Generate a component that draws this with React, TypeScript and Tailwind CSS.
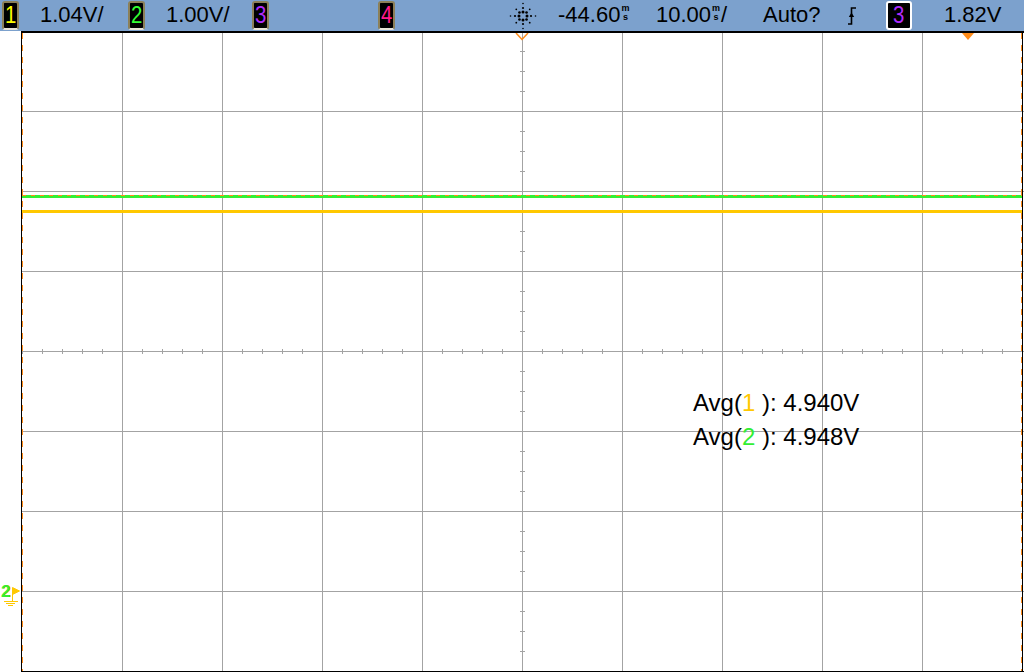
import React from "react"

const GRID = "#a3a3a3"

function Badge({ n, color, wide }: { n: string; color: string; wide?: boolean }) {
  return (
    <span
      className={
        wide
          ? "w-[26px] h-[29px] shrink-0 bg-black border-2 border-white rounded-[3px] flex items-center justify-center text-[24px] leading-none overflow-hidden"
          : "w-[17px] h-[29px] shrink-0 bg-black border-2 border-[#8c8058] border-b-[#e8e4d8] rounded-[3px] flex items-center justify-center text-[24px] leading-none overflow-hidden"
      }
      style={{ color }}
    >
      <span className="scale-x-[0.85] -mt-[1px]">{n}</span>
    </span>
  )
}

function Unit() {
  return (
    <span className="inline-flex flex-col items-center text-[9px] font-bold leading-[9px] -translate-y-[4px] mx-[1px]">
      <span>m</span>
      <span>s</span>
    </span>
  )
}

function Sun() {
  const dots: { x: number; y: number; r: number }[] = []
  for (let i = 0; i < 8; i++) {
    const a = (i * Math.PI) / 4
    const card = i % 2 === 0
    const rings = card ? [[4, 1.5], [8, 1.1], [12.5, 0.8]] : [[5, 1.3], [9.5, 0.9]]
    rings.forEach(([d, r]) => dots.push({ x: 15 + Math.cos(a) * d, y: 14 + Math.sin(a) * d, r }))
  }
  return (
    <svg width="30" height="28" viewBox="0 0 30 28" className="shrink-0">
      {dots.map((d, i) => (
        <circle key={i} cx={d.x} cy={d.y} r={d.r} fill="#000" />
      ))}
    </svg>
  )
}

function TriggerEdge() {
  return (
    <svg width="9" height="18" viewBox="0 0 9 18" className="shrink-0">
      <path d="M0 17 H3.5 V1 H8" stroke="#000" strokeWidth="1.6" fill="none" />
      <polygon points="0.8,10 3.5,5.5 6.2,10" fill="#000" />
    </svg>
  )
}

function Plot() {
  const w = 1003
  const h = 641
  const vLines = Array.from({ length: 9 }, (_, k) => 101 + 100 * k)
  const hLines = Array.from({ length: 7 }, (_, k) => 80 + 80 * k)
  const xTicks = Array.from({ length: 51 }, (_, k) => 1 + 20 * k)
  const yTicks = Array.from({ length: 33 }, (_, k) => 20 * k)
  return (
    <svg width={w} height={h} viewBox={`0 0 ${w} ${h}`} className="shrink-0 block">
      <rect x="0" y="0" width={w} height={h} fill="#fff" />
      {vLines.map((x) => (
        <line key={"v" + x} x1={x + 0.5} y1={0} x2={x + 0.5} y2={h} stroke={GRID} strokeWidth="1" />
      ))}
      {hLines.map((y) => (
        <line key={"h" + y} x1={0} y1={y + 0.5} x2={w} y2={y + 0.5} stroke={GRID} strokeWidth="1" />
      ))}
      {xTicks.map((x) => (
        <line key={"xt" + x} x1={x + 0.5} y1={318} x2={x + 0.5} y2={323} stroke={GRID} strokeWidth="1" />
      ))}
      {yTicks.map((y) => (
        <line key={"yt" + y} x1={499} y1={y + 0.5} x2={504} y2={y + 0.5} stroke={GRID} strokeWidth="1" />
      ))}

      {/* traces */}
      <rect x="1" y="164" width="1000" height="3" fill="#33f033" />
      <line x1="1" y1="164.5" x2="1001" y2="164.5" stroke="#ff8c1a" strokeWidth="1" strokeDasharray="4 5" />
      <rect x="1" y="179" width="1000" height="3" fill="#ffc800" />

      {/* time reference markers */}
      <line x1="1.5" y1="2" x2="1.5" y2={h} stroke="#ff8c1a" strokeWidth="1" strokeDasharray="6 6" />
      <line x1="1000.5" y1="2" x2="1000.5" y2={h} stroke="#ff8c1a" strokeWidth="1" strokeDasharray="6 6" />
      <polyline points="495,2 501,8.5 507,2" fill="none" stroke="#ff8c1a" strokeWidth="1.5" />
      <polygon points="941,2 953,2 947,9" fill="#ff8c1a" />

      {/* frame */}
      <rect x="0" y="0" width={w} height="2" fill="#000" />
      <line x1="0.5" y1="0" x2="0.5" y2={h} stroke="#000" strokeWidth="1" />
      <line x1="1001.5" y1="0" x2="1001.5" y2={h} stroke="#000" strokeWidth="1" />
      <line x1="0" y1="640.5" x2={w} y2="640.5" stroke="#000" strokeWidth="1" />
    </svg>
  )
}

export default function App() {
  return (
    <div className="w-[1024px] h-[672px] bg-white overflow-hidden flex flex-col font-['Liberation_Sans',Arial,sans-serif] text-black">
      {/* status bar */}
      <div className="h-[31px] shrink-0 bg-[#7ca1cd] flex items-center pl-[2px] text-[22px] leading-none whitespace-nowrap">
        <Badge n="1" color="#ffff00" />
        <span className="ml-[21px] w-[88px] shrink-0 mb-[2px]">1.04V/</span>
        <Badge n="2" color="#33ff33" />
        <span className="ml-[21px] w-[86px] shrink-0 mb-[2px]">1.00V/</span>
        <Badge n="3" color="#b02cff" />
        <span className="w-[109px] shrink-0" />
        <Badge n="4" color="#ff1a8c" />
        <span className="w-[113px] shrink-0" />
        <Sun />
        <span className="ml-[20px] w-[98px] shrink-0 mb-[2px] flex items-end">
          <span>-44.60</span>
          <Unit />
        </span>
        <span className="w-[107px] shrink-0 mb-[2px] flex items-end">
          <span>10.00</span>
          <Unit />
          <span>/</span>
        </span>
        <span className="w-[85px] shrink-0 mb-[2px]">Auto?</span>
        <span className="w-[38px] shrink-0 flex">
          <TriggerEdge />
        </span>
        <Badge n="3" color="#b02cff" wide />
        <span className="ml-[32px] mb-[2px]">1.82V</span>
      </div>

      {/* graticule */}
      <div className="flex-1 flex relative">
        <div className="w-[21px] shrink-0 relative">
          <span className="absolute left-[1px] top-[552px] text-[17px] font-bold leading-none text-[#33ee33] [text-shadow:1px_0_0_#ffc800]">
            2
          </span>
          <svg width="21" height="30" viewBox="0 0 21 30" className="absolute left-0 top-[555px]">
            <polygon points="12.5,1.5 19.5,5 12.5,8.5" fill="#ffc800" stroke="#ffc800" strokeWidth="1" />
            <line x1="12.5" y1="8" x2="12.5" y2="15" stroke="#ffc800" strokeWidth="1" />
            <line x1="4" y1="15.5" x2="18" y2="15.5" stroke="#ffc800" strokeWidth="1" />
            <line x1="6" y1="17.5" x2="15" y2="17.5" stroke="#ffc800" strokeWidth="1" />
            <line x1="8" y1="19.5" x2="13" y2="19.5" stroke="#ffc800" strokeWidth="1" />
          </svg>
        </div>
        <Plot />

        {/* measurements */}
        <div className="absolute left-[693px] top-[355px] text-[24px] leading-[34px]">
          <div>
            Avg(<span className="text-[#ffc800]">1</span> ): 4.940V
          </div>
          <div>
            Avg(<span className="text-[#33ee33]">2</span> ): 4.948V
          </div>
        </div>
      </div>
    </div>
  )
}
